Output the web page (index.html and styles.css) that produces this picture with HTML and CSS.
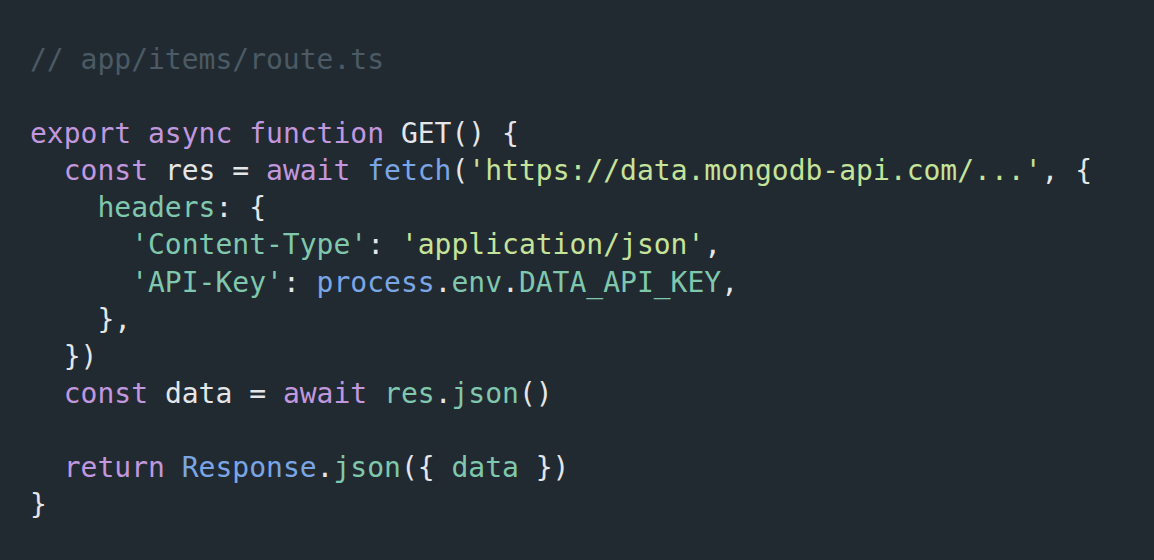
FILE: index.html
```html
<!DOCTYPE html>
<html lang="en">
<head>
<meta charset="utf-8">
<title>route.ts</title>
<link rel="stylesheet" href="styles.css">
</head>
<body>
<pre class="code"><code><span class="cm">// app/items/route.ts</span>

<span class="kw">export</span> <span class="kw">async</span> <span class="kw">function</span> <span class="tx">GET() {</span>
  <span class="kw">const</span> <span class="tx">res =</span> <span class="kw">await</span> <span class="fn">fetch</span><span class="tx">(</span><span class="st">'https://data.mongodb-api.com/...'</span><span class="tx">, {</span>
    <span class="pr">headers</span><span class="tx">: {</span>
      <span class="pr">'Content-Type'</span><span class="tx">:</span> <span class="st">'application/json'</span><span class="tx">,</span>
      <span class="pr">'API-Key'</span><span class="tx">:</span> <span class="fn">process</span><span class="tx">.</span><span class="pr">env</span><span class="tx">.</span><span class="pr">DATA_API_KEY</span><span class="tx">,</span>
    <span class="tx">},</span>
  <span class="tx">})</span>
  <span class="kw">const</span> <span class="tx">data =</span> <span class="kw">await</span> <span class="pr">res</span><span class="tx">.</span><span class="pr">json</span><span class="tx">()</span>

  <span class="kw">return</span> <span class="fn">Response</span><span class="tx">.</span><span class="pr">json</span><span class="tx">({</span> <span class="pr">data</span> <span class="tx">})</span>
<span class="tx">}</span></code></pre>
</body>
</html>
```
FILE: styles.css
```css
html, body {
  margin: 0;
  padding: 0;
  background: #222a31;
  height: 100%;
}
.code {
  margin: 0;
  padding: 41px 30px;
  font-family: "DejaVu Sans Mono", "Liberation Mono", monospace;
  font-size: 28px;
  line-height: 37.1px;
  color: #e4e6e8;
  background: #222a31;
}
.cm { color: #4b5a64; }
.kw { color: #c197de; }
.fn { color: #7ba6e6; }
.st { color: #c6e39a; }
.pr { color: #7fc8ad; }
.tx { color: #e4e6e8; }
```
